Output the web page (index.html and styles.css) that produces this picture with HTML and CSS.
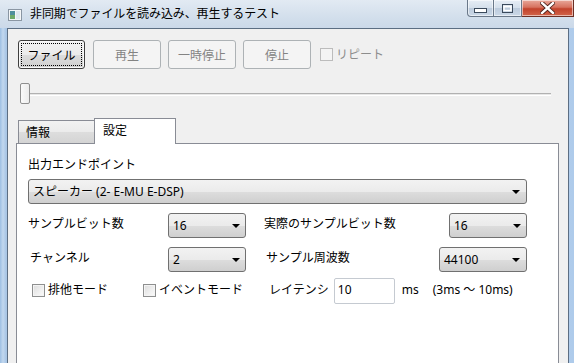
FILE: index.html
```html
<!DOCTYPE html>
<html lang="ja">
<head>
  <meta charset="UTF-8">
  <title>非同期でファイルを読み込み、再生するテスト</title>
  <link rel="stylesheet" href="styles.css">
</head>
<body>
  <div class="window">
    <div class="titlebar">
      <svg class="app-icon" width="14" height="12" viewBox="0 0 14 12">
        <rect x="0.5" y="0.5" width="13" height="11" fill="#f4f6f8" stroke="#8a96a3"/>
        <rect x="2" y="2" width="5" height="8" fill="#4f8f9c"/>
        <rect x="2" y="6" width="5" height="4" fill="#6faa6a"/>
        <rect x="8" y="2" width="4" height="8" fill="#dfe8ee"/>
      </svg>
      <span class="title">非同期でファイルを読み込み、再生するテスト</span>
      <div class="caption-buttons">
        <span class="cap cap-min">
          <svg width="13" height="5" viewBox="0 0 13 5"><rect x="0.5" y="0.5" width="12" height="4" fill="#fff" stroke="#3b4a5c"/></svg>
        </span>
        <span class="cap cap-max">
          <svg width="11" height="9" viewBox="0 0 11 9"><rect x="0.5" y="0.5" width="10" height="8" fill="none" stroke="#3b4a5c"/><rect x="2" y="2.5" width="7" height="4" fill="none" stroke="#fff" stroke-width="1.4"/></svg>
        </span>
        <span class="cap cap-close">
          <svg width="15" height="12" viewBox="0 0 15 12"><path d="M2 1 L13 11 M13 1 L2 11" stroke="#4a1f18" stroke-width="4.2" stroke-linecap="square"/><path d="M2 1 L13 11 M13 1 L2 11" stroke="#fff" stroke-width="2.4" stroke-linecap="square"/></svg>
        </span>
      </div>
    </div>

    <div class="client">
      <div class="toolbar">
        <button class="btn btn-default"><span class="focus">ファイル</span></button>
        <button class="btn" disabled>再生</button>
        <button class="btn" disabled>一時停止</button>
        <button class="btn" disabled>停止</button>
        <label class="check check-disabled"><span class="box"></span>リピート</label>
      </div>

      <div class="slider">
        <span class="thumb"></span>
      </div>

      <div class="tabs">
        <div class="tab">情報</div>
        <div class="tab tab-active">設定</div>
      </div>

      <div class="panel">
        <div class="section-label">出力エンドポイント</div>
        <div class="combo combo-wide">スピーカー (2- E-MU E-DSP)<span class="arrow"></span></div>

        <div class="row row-bits">
          <span class="lbl lbl-first">サンプルビット数</span>
          <div class="combo combo-small">16<span class="arrow"></span></div>
          <span class="lbl lbl-second">実際のサンプルビット数</span>
          <div class="combo combo-small">16<span class="arrow"></span></div>
        </div>

        <div class="row row-channel">
          <span class="lbl lbl-first lbl-indent">チャンネル</span>
          <div class="combo combo-small">2<span class="arrow"></span></div>
          <span class="lbl lbl-second lbl-rate">サンプル周波数</span>
          <div class="combo combo-rate">44100<span class="arrow"></span></div>
        </div>

        <div class="row row-options">
          <label class="check check-exclusive"><span class="box"></span>排他モード</label>
          <label class="check check-event"><span class="box"></span>イベントモード</label>
          <span class="lbl">レイテンシ</span>
          <input class="textbox" type="text" value="10">
          <span class="unit">ms</span>
          <span class="range">(3ms ～ 10ms)</span>
        </div>
      </div>
    </div>
  </div>
</body>
</html>
```

FILE: styles.css
```css
html, body {
  margin: 0;
  padding: 0;
  overflow: hidden;
}

body {
  font-family: "Noto Sans", "Noto Sans CJK JP", sans-serif;
  font-size: 12px;
  line-height: 16px;
  color: #000;
}

.window {
  width: 574px;
  height: 363px;
  display: flex;
  flex-direction: column;
  padding: 0 5px 0 7px;
  box-sizing: border-box;
  background: linear-gradient(90deg, #9dbfe3 0px, #c2d8ef 3px, #a9c6e6 6px, #dbe6f2 40px, #d6e2ef 300px, #c3d5ea 480px, #aecbeb 574px);
  overflow: hidden;
}

/* title bar */

.titlebar {
  height: 28px;
  display: flex;
  align-items: center;
  margin-left: -7px;
  margin-right: -5px;
  padding-left: 8px;
  background: linear-gradient(180deg, #e2eaf3 0%, #d3dfec 60%, #cbd9e9 100%);
}

.app-icon {
  margin-top: 1px;
}

.title {
  margin-left: 8px;
  font-size: 12px;
  color: #000;
  letter-spacing: -0.1px;
}

.caption-buttons {
  margin-left: auto;
  align-self: flex-start;
  display: flex;
  height: 18px;
}

.cap {
  display: flex;
  align-items: center;
  justify-content: center;
  height: 17px;
  border: 1px solid #6a7889;
  border-top: none;
  box-sizing: border-box;
  background: linear-gradient(180deg, #e6edf5 0%, #d4dfeb 50%, #bccbdc 51%, #cbd8e7 100%);
  box-shadow: inset 0 0 0 1px rgba(255, 255, 255, 0.55);
}

.cap-min {
  width: 27px;
  border-radius: 0 0 0 4px;
  padding-top: 5px;
}

.cap-max {
  width: 28px;
  border-left: none;
}

.cap-close {
  width: 52px;
  border-left: none;
  background: linear-gradient(180deg, #e9a99b 0%, #d7725f 45%, #c2432c 55%, #d2644a 100%);
  border-color: #6c2f25;
}

/* client area */

.client {
  flex: 1;
  display: flex;
  flex-direction: column;
  background: #f0f0f0;
  border: 1px solid #5c6e83;
  border-bottom: none;
  padding: 11px 9px 0 10px;
}

.toolbar {
  display: flex;
  align-items: center;
  height: 29px;
}

.btn {
  width: 68px;
  height: 29px;
  margin-right: 7px;
  padding: 0;
  font-family: inherit;
  font-size: 12px;
  border: 1px solid #adb2b5;
  border-radius: 3px;
  background: #f4f4f4;
  color: #838383;
}

.btn-default {
  width: 67px;
  margin-right: 8px;
  border-color: #3f3f3f;
  color: #000;
  padding: 2px;
  background: linear-gradient(180deg, #f2f2f2 0%, #ebebeb 50%, #dddddd 51%, #cfcfcf 100%);
  box-shadow: inset 0 0 0 1px #f8f8f8;
}

.btn-default .focus {
  display: flex;
  align-items: center;
  justify-content: center;
  height: 100%;
  border: 1px dotted #000;
  box-sizing: border-box;
}

.check {
  display: flex;
  align-items: center;
  gap: 3px;
}

.box {
  width: 13px;
  height: 13px;
  box-sizing: border-box;
  border: 1px solid #8e8f8f;
  background: linear-gradient(135deg, #dcdcdc 0%, #f0f0f0 60%, #fbfbfb 100%);
  box-shadow: inset 0 0 0 1px #f4f4f4;
}

.check-disabled {
  color: #8d8d8d;
  margin-left: 2px;
}

.check-disabled .box {
  border-color: #bcbcbc;
  background: #f4f4f4;
}

/* slider */

.slider {
  position: relative;
  height: 21px;
  margin: 14px 8px 0 2px;
  display: flex;
  align-items: center;
}

.slider::before {
  content: "";
  flex: 1;
  height: 1px;
  border-top: 1px solid #b1b1b1;
  border-bottom: 1px solid #ffffff;
  background: #e7e7e7;
  margin-top: 1px;
}

.thumb {
  position: absolute;
  left: 0;
  top: 0;
  width: 10px;
  height: 21px;
  box-sizing: border-box;
  border: 1px solid #8f8f8f;
  border-radius: 2px;
  background: linear-gradient(90deg, #fafafa 0%, #ececec 100%);
}

/* tabs */

.tabs {
  display: flex;
  align-items: flex-end;
  height: 25px;
  margin-top: 14px;
  position: relative;
  z-index: 1;
}

.tab {
  width: 77px;
  height: 23px;
  box-sizing: border-box;
  padding: 4px 0 0 7px;
  border: 1px solid #898c95;
  border-bottom: none;
  background: linear-gradient(180deg, #f2f2f2 0%, #ebebeb 50%, #dddddd 51%, #d4d4d4 100%);
}

.tab-active {
  width: 82px;
  height: 26px;
  margin-bottom: -1px;
  margin-left: -1px;
  padding: 4px 0 0 8px;
  background: #fff;
}

.panel {
  flex: 1;
  margin-left: -2px;
  border: 1px solid #898c95;
  border-bottom: none;
  background: #fff;
  padding: 13px 0 0 11px;
}

.section-label {
  height: 16px;
}

.combo {
  position: relative;
  height: 25px;
  box-sizing: border-box;
  padding: 4px 0 0 4px;
  border: 1px solid #707070;
  border-radius: 3px;
  background: linear-gradient(180deg, #f2f2f2 0%, #ebebeb 50%, #dddddd 51%, #cfcfcf 100%);
  white-space: nowrap;
}

.arrow {
  position: absolute;
  right: 6px;
  top: 10px;
  width: 0;
  height: 0;
  border-left: 4px solid transparent;
  border-right: 4px solid transparent;
  border-top: 4px solid #000;
}

.combo-wide {
  width: 499px;
  margin-top: 6px;
}

.combo-small {
  width: 78px;
}

.combo-small .arrow {
  right: 5px;
}

.combo-rate {
  width: 88px;
}

.row {
  display: flex;
  align-items: center;
  height: 25px;
  margin-top: 9px;
}

.lbl {
  margin-top: -3px;
  white-space: nowrap;
}

.lbl-first {
  width: 140px;
}

.lbl-indent {
  padding-left: 2px;
  width: 138px;
}

.lbl-second {
  width: 185px;
  margin-left: 18px;
}

.lbl-rate {
  width: 173px;
  margin-left: 20px;
}

.row-channel {
  margin-top: 9px;
}

.row-options {
  height: 26px;
  margin-top: 6px;
}

.check-exclusive {
  margin-left: 4px;
  width: 111px;
}

.check-event {
  width: 126px;
}

.row-options .check {
  margin-top: -2px;
}

.textbox {
  width: 61px;
  height: 26px;
  box-sizing: border-box;
  margin: 0 0 0 5px;
  padding: 0 0 4px 3px;
  border: 1px solid #c5cad1;
  border-radius: 2px;
  font-family: inherit;
  font-size: 12px;
  color: #000;
}

.unit {
  margin-left: 7px;
  margin-top: -3px;
}

.range {
  margin-left: 14px;
  margin-top: -3px;
}
```
